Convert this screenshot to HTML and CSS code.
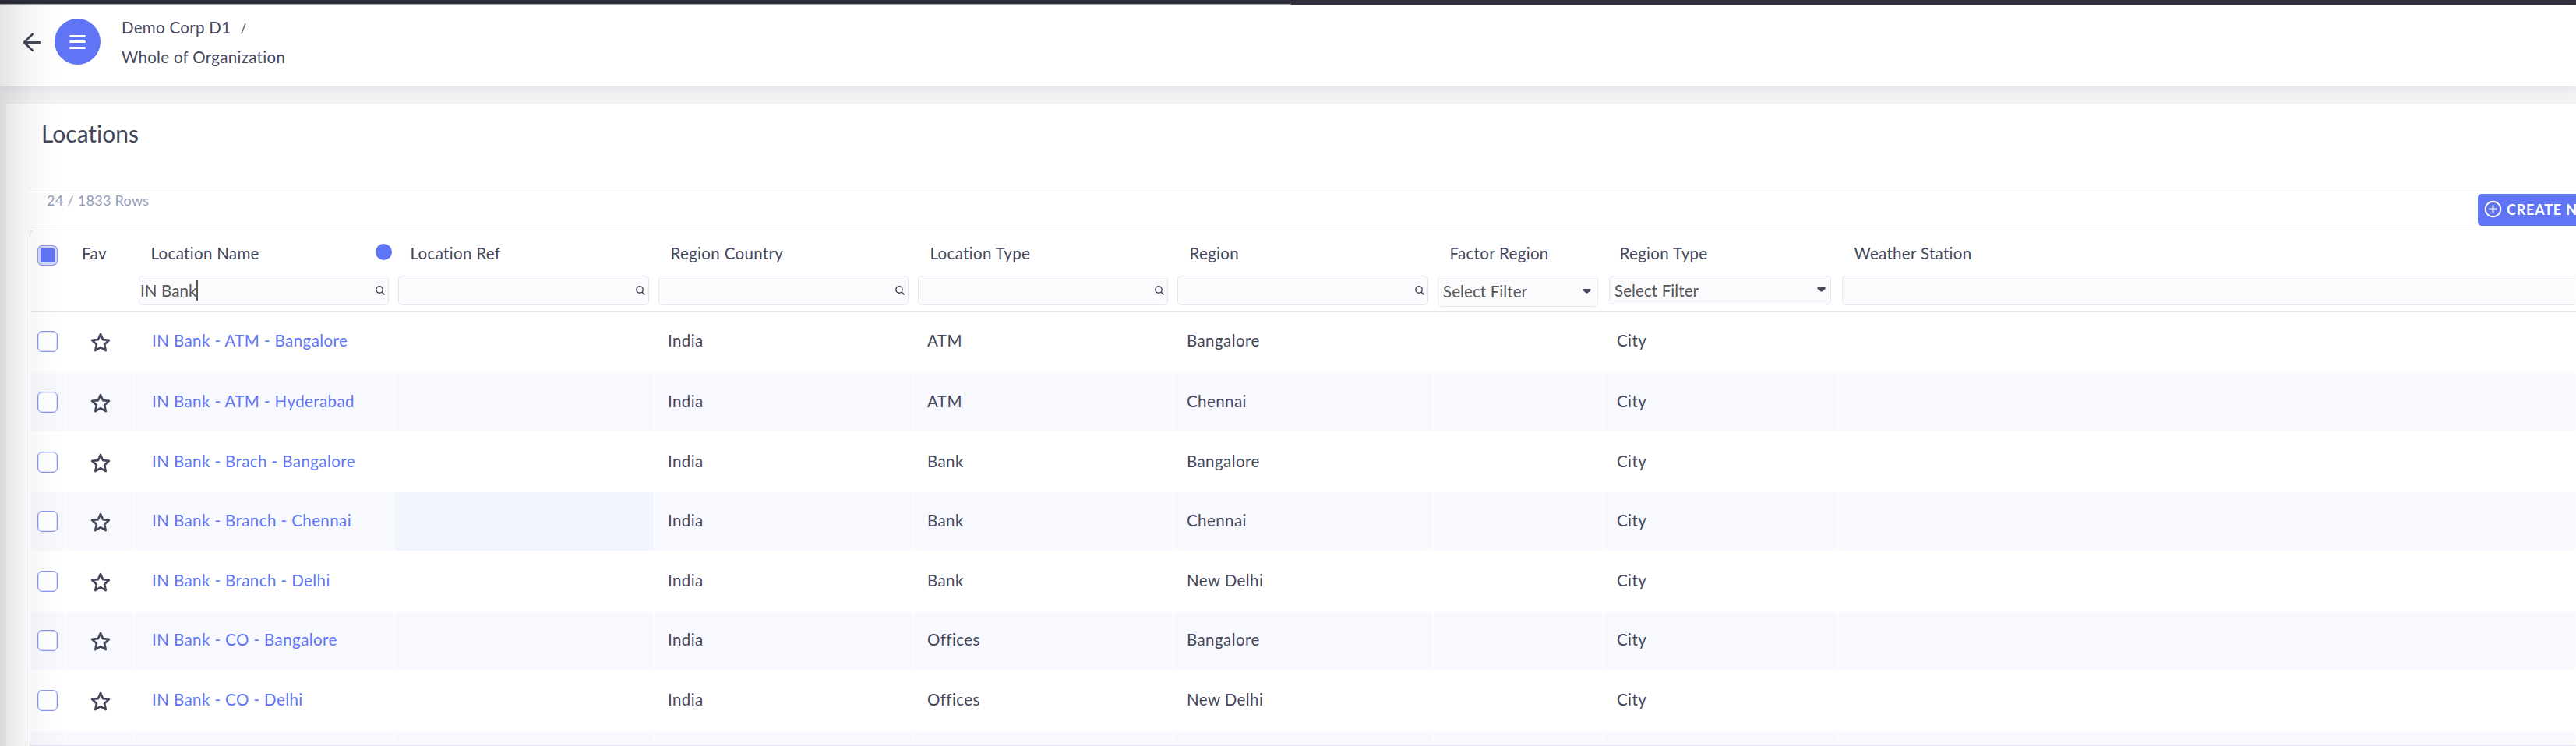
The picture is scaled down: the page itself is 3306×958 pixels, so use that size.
FILE: index.html
```html
<!DOCTYPE html>
<html lang="en">
<head>
<meta charset="utf-8">
<title>Locations</title>
<link rel="stylesheet" href="styles.css">
</head>
<body>
<svg class="defs" width="0" height="0">
  <symbol id="star" viewBox="0 0 24 24"><path d="M12 2l2.900 6.500 7.100.7-5.300 4.900 1.500 7.200L12 17.700 5.800 21.300l1.500-7.200L2 9.200l7.100-.7z" fill="none" stroke="currentColor" stroke-width="2.500" stroke-linejoin="round"/></symbol>
  <symbol id="search" viewBox="0 0 12 12"><circle cx="5" cy="5" r="4.200" fill="none" stroke="currentColor" stroke-width="1.400"/><path d="M8 8l3.500 3.500" stroke="currentColor" stroke-width="1.600"/></symbol>
  <symbol id="caret" viewBox="0 0 12 8"><path d="M1.500 0h9q1.500 0 1.500 1.300 0 .6-.6 1.200L7.200 6q-1.200 1-2.400 0L.6 2.500Q0 1.900 0 1.300 0 0 1.500 0z" fill="currentColor"/></symbol>
</svg>
<div class="app">
  <div class="loading-bar"><div class="loading-done"></div></div>
  <header class="topbar">
    <svg class="back" viewBox="0 0 24 24"><path d="M22 12.500H2.500M12.500 2L2 12.500 12.500 22.500" fill="none" stroke="currentColor" stroke-width="2.800" stroke-linecap="round" stroke-linejoin="round"/></svg>
    <div class="menu"><i></i><i></i><i></i></div>
    <div class="crumbs">
      <div><span class="crumb-root">Demo Corp D1</span><span class="slash">/</span></div>
      <div class="crumb-leaf">Whole of Organization</div>
    </div>
  </header>
  <main class="card">
    <h1><span>Locations</span></h1>
    <div class="toolbar">
      <div class="count">24 / 1833 Rows</div>
      <div class="create"><svg viewBox="0 0 24 24"><circle cx="12" cy="12" r="10.200" fill="none" stroke="currentColor" stroke-width="2"/><path d="M12 7.200v9.600M7.200 12h9.600" stroke="currentColor" stroke-width="2" stroke-linecap="round"/></svg><span>CREATE N</span></div>
    </div>
    <div class="table">
      <div class="row head">
        <div class="check-cell"><b class="box on"></b></div>
        <div class="fav"><span class="h">Fav</span></div>
        <div class="col"><span class="h">Location Name</span><em class="dot"></em><div class="input typed"><span>IN Bank</span><i class="cursor"></i><svg class="s"><use href="#search"/></svg></div></div>
        <div class="col"><span class="h">Location Ref</span><div class="input"><svg class="s"><use href="#search"/></svg></div></div>
        <div class="col"><span class="h">Region Country</span><div class="input"><svg class="s"><use href="#search"/></svg></div></div>
        <div class="col"><span class="h">Location Type</span><div class="input"><svg class="s"><use href="#search"/></svg></div></div>
        <div class="col"><span class="h">Region</span><div class="input"><svg class="s"><use href="#search"/></svg></div></div>
        <div class="col"><span class="h">Factor Region</span><div class="input select tall"><span>Select Filter</span><svg class="c"><use href="#caret"/></svg></div></div>
        <div class="col"><span class="h">Region Type</span><div class="input select short"><span>Select Filter</span><svg class="c"><use href="#caret"/></svg></div></div>
        <div class="col last"><span class="h">Weather Station</span><div class="input"></div></div>
      </div>
      <div class="row first"><div class="check-cell"><b class="box"></b></div><div class="fav"><svg class="star"><use href="#star"/></svg></div><div class="link"><span>IN Bank - ATM - Bangalore</span></div><div></div><div><span>India</span></div><div><span>ATM</span></div><div><span>Bangalore</span></div><div></div><div><span>City</span></div><div></div></div>
      <div class="row alt"><div class="check-cell"><b class="box"></b></div><div class="fav"><svg class="star"><use href="#star"/></svg></div><div class="link"><span>IN Bank - ATM - Hyderabad</span></div><div></div><div><span>India</span></div><div><span>ATM</span></div><div><span>Chennai</span></div><div></div><div><span>City</span></div><div></div></div>
      <div class="row"><div class="check-cell"><b class="box"></b></div><div class="fav"><svg class="star"><use href="#star"/></svg></div><div class="link"><span>IN Bank - Brach - Bangalore</span></div><div></div><div><span>India</span></div><div><span>Bank</span></div><div><span>Bangalore</span></div><div></div><div><span>City</span></div><div></div></div>
      <div class="row alt"><div class="check-cell"><b class="box"></b></div><div class="fav"><svg class="star"><use href="#star"/></svg></div><div class="link"><span>IN Bank - Branch - Chennai</span></div><div class="hover"></div><div><span>India</span></div><div><span>Bank</span></div><div><span>Chennai</span></div><div></div><div><span>City</span></div><div></div></div>
      <div class="row"><div class="check-cell"><b class="box"></b></div><div class="fav"><svg class="star"><use href="#star"/></svg></div><div class="link"><span>IN Bank - Branch - Delhi</span></div><div></div><div><span>India</span></div><div><span>Bank</span></div><div><span>New Delhi</span></div><div></div><div><span>City</span></div><div></div></div>
      <div class="row alt"><div class="check-cell"><b class="box"></b></div><div class="fav"><svg class="star"><use href="#star"/></svg></div><div class="link"><span>IN Bank - CO - Bangalore</span></div><div></div><div><span>India</span></div><div><span>Offices</span></div><div><span>Bangalore</span></div><div></div><div><span>City</span></div><div></div></div>
      <div class="row"><div class="check-cell"><b class="box"></b></div><div class="fav"><svg class="star"><use href="#star"/></svg></div><div class="link"><span>IN Bank - CO - Delhi</span></div><div></div><div><span>India</span></div><div><span>Offices</span></div><div><span>New Delhi</span></div><div></div><div><span>City</span></div><div></div></div>
      <div class="row alt"><div></div><div></div><div></div><div></div><div></div><div></div><div></div><div></div><div></div><div></div></div>
    </div>
  </main>
  <div class="edge-shadow"></div>
</div>
</body>
</html>
```
FILE: styles.css
```css
* { box-sizing: border-box; }
body {
  margin: 0;
  font-family: Lato, "Noto Sans", sans-serif;
  font-size: 20.5px;
  font-variant-ligatures: none;
  color: #44475b;
  overflow: hidden;
}
.defs { position: absolute; }
.app {
  position: relative;
  width: 3306px;
  height: 958px;
  overflow: hidden;
  background: #f2f2f5;
  display: flex;
  flex-direction: column;
}
span { white-space: nowrap; }
.loading-bar { height: 6px; flex: none; background: #2f303e; border-bottom: 1px solid #352f3f; }
.loading-done { width: 1657px; height: 6px; border-bottom: 1px solid #aaa9b0; }
.topbar {
  height: 105px;
  flex: none;
  background: #fff;
  box-shadow: 0 2px 14px rgba(40, 40, 50, .07);
  display: flex;
  align-items: flex-start;
}
.back { width: 24px; height: 24px; margin: 36px 0 0 29px; }
.menu {
  width: 59px; height: 59px; border-radius: 50%; background: #6075f6;
  margin: 18px 0 0 17px;
  display: flex; flex-direction: column; align-items: center; justify-content: center; gap: 4.500px;
}
.menu i { width: 21px; height: 3px; border-radius: 2px; background: #fff; }
.crumbs { margin: 11px 0 0 27px; line-height: 37.500px; letter-spacing: .3px; }
.crumb-leaf { margin-top: -1px; }
.slash { margin-left: 12px; font-size: 17px; }
.card { margin: 22px 0 0 8px; background: #fff; height: 825px; flex: none; }
h1 { margin: 0; font-size: 30px; font-weight: 400; height: 108px; padding: 20px 0 0 45px; line-height: 36px; }
.toolbar {
  margin-left: 30px; height: 54px; border-top: 1px solid #e4e5f1;
  display: flex; justify-content: space-between; align-items: flex-start;
}
.count { margin: 4px 0 0 22px; font-size: 18px; line-height: 22px; color: #929db9; letter-spacing: .3px; }
.create {
  width: 126px; height: 41px; margin-top: 7px; background: #6075f6; color: #fff;
  border-radius: 5px 0 0 5px; display: flex; align-items: center; gap: 6px;
  padding: 0 0 2px 8px; overflow: hidden; font-size: 18px; font-weight: 700; letter-spacing: .8px;
}
.create svg { width: 23px; height: 23px; flex: none; }
.table {
  margin-left: 30px; height: 663px; overflow: hidden;
  border: 1px solid #e4e5f1; border-right: 0; border-radius: 6px 0 0 0;
}
.row {
  display: grid;
  grid-template-columns: 46px 88px 333px 334px 333px 333px 334px 218px 301px 1fr;
  height: 76.600px;
}
.row > div { display: flex; align-items: flex-start; padding: 22px 0 0 17px; border-right: 1px solid transparent; line-height: 28px; letter-spacing: .42px; }
.row.first { height: 78px; }
.row.alt > div { background: #f8f9fe; border-right-color: #fff; border-bottom: 2px solid #fff; }
.row.alt > .hover { background: #f1f5fe; }
.row > .link { color: #6075f6; padding-left: 22px; }
.row > .check-cell { padding: 24px 0 0 9px; }
.box { width: 26px; height: 27px; border: 1px solid #8796f8; box-shadow: inset 0 0 0 1px #dde1fd; border-radius: 6px; background: #fff; flex: none; }
.box.on { height: 26px; background: #6075f6; border-color: #8b9af7; box-shadow: inset 0 0 0 3px #d4d9fc; }
.row > .fav { padding: 26px 0 0 31px; }
.star { width: 26px; height: 26px; }
.row.head { height: 105px; border-bottom: 1px solid #e4e5f1; }
.head > div.check-cell { padding-top: 19px; }
.head > div.fav { padding: 15px 0 0 20px; }
.head > div.col { flex-wrap: wrap; padding: 15px 14px 0 5px; align-content: flex-start; justify-content: space-between; letter-spacing: .32px; }
.head > div.last { padding-right: 0; }
.h { padding-left: 15.500px; height: 28px; }
.fav .h { padding: 0; }
.dot { width: 21px; height: 21px; border-radius: 50%; background: #6075f6; margin-right: -12px; margin-top: 2px; }
.input {
  width: calc(100% + 8px); margin-right: -8px; flex: none; height: 38px; margin-top: 15px;
  background: #fbfbfe; border: 1px solid #e4e6f2; border-radius: 5px;
  display: flex; align-items: center; color: #555; letter-spacing: .1px;
}
.last .input { margin-right: 0; width: 100%; border-right: 0; border-radius: 5px 0 0 5px; }
.s { width: 12px; height: 12px; margin: 0 4px 0 auto; color: #44475b; }
.typed span { margin-left: 1px; }
.cursor { width: 2px; height: 26px; background: #555; }
.select { padding: 0 8px 0 6px; }
.c { width: 11px; height: 7px; margin-left: auto; color: #44475b; }
.tall { height: 40px; }
.short { height: 37px; margin-left: 2px; width: calc(100% + 4px); margin-right: -6px; padding-right: 6px; }
.edge-shadow {
  position: absolute; left: 0; top: 0; width: 84px; height: 958px; pointer-events: none;
  background: linear-gradient(90deg, rgba(0,0,0,.1), rgba(0,0,0,.065) 20px, rgba(0,0,0,.03) 40px, rgba(0,0,0,.01) 60px, rgba(0,0,0,0));
}
```
